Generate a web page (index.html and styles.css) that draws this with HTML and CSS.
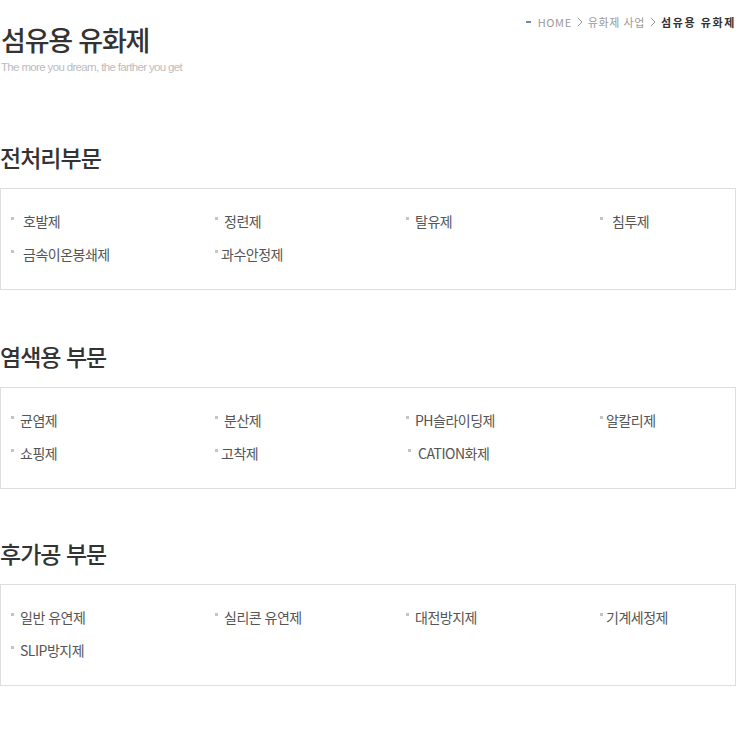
FILE: index.html
```html
<!DOCTYPE html>
<html lang="ko">
<head>
    <meta charset="UTF-8">
    <meta name="viewport" content="width=device-width, initial-scale=1.0">
    <title>섬유용 유화제</title>
    <link rel="stylesheet" href="styles.css">
</head>
<body>
    <div id="container">
        <div id="top">
            <div class="titleBox">
                <h1>섬유용 유화제</h1>
                <p class="sub">The more you dream, the farther you get</p>
            </div>
            <div class="path">
                <span class="dash"></span>
                <span>HOME</span>
                <svg class="arrow" width="6" height="10" viewBox="0 0 6 10"><path d="M0.8 0.8 L5 5 L0.8 9.2" fill="none" stroke="#999" stroke-width="1"/></svg>
                <span>유화제 사업</span>
                <svg class="arrow" width="6" height="10" viewBox="0 0 6 10"><path d="M0.8 0.8 L5 5 L0.8 9.2" fill="none" stroke="#999" stroke-width="1"/></svg>
                <strong>섬유용 유화제</strong>
            </div>
        </div>

        <div class="section first">
            <h2>전처리부문</h2>
            <ul class="items">
                <li class="wide">호발제</li>
                <li>정련제</li>
                <li>탈유제</li>
                <li class="wide">침투제</li>
                <li class="wide">금속이온봉쇄제</li>
                <li class="tight">과수안정제</li>
            </ul>
        </div>

        <div class="section">
            <h2>염색용 부문</h2>
            <ul class="items">
                <li>균염제</li>
                <li>분산제</li>
                <li>PH슬라이딩제</li>
                <li class="tight">알칼리제</li>
                <li>쇼핑제</li>
                <li class="tight">고착제</li>
                <li class="shift">CATION화제</li>
            </ul>
        </div>

        <div class="section last">
            <h2>후가공 부문</h2>
            <ul class="items">
                <li>일반 유연제</li>
                <li>실리콘 유연제</li>
                <li>대전방지제</li>
                <li class="tight">기계세정제</li>
                <li>SLIP방지제</li>
            </ul>
        </div>
    </div>
</body>
</html>
```

FILE: styles.css
```css
*{
    margin: 0;
    padding: 0;
    box-sizing: border-box;
}
body{
    width: 100%;
    background-color: white;
    font-family: "Noto Sans", "Noto Sans CJK KR", sans-serif;
    color: #333;
}
#container{
    width: 736px;
    padding-bottom: 60px;
}
#top{
    display: flex;
    justify-content: space-between;
    align-items: flex-start;
}
.titleBox{
    padding-top: 22px;
    padding-left: 1px;
}
.titleBox h1{
    font-family: "Noto Sans CJK KR", sans-serif;
    font-size: 27px;
    font-weight: 500;
    line-height: 36px;
    letter-spacing: -1.2px;
    color: #333;
}
.sub{
    font-family: "Liberation Sans", sans-serif;
    font-size: 11.5px;
    line-height: 14px;
    letter-spacing: -0.65px;
    color: #bcbcbc;
    margin-top: 2px;
}
.path{
    display: flex;
    align-items: center;
    gap: 5px;
    padding-top: 14px;
    font-family: "Noto Sans CJK KR", sans-serif;
    font-size: 11px;
    line-height: 16px;
    letter-spacing: 0.6px;
    color: #999;
    white-space: nowrap;
}
.path .dash{
    width: 5px;
    height: 2px;
    background-color: #6a8ab4;
    margin-right: 2px;
}
.path strong{
    color: #333;
    font-weight: 700;
    letter-spacing: 1.6px;
}
.section{
    margin-top: 51px;
}
.section.first{
    margin-top: 68px;
}
.section.last{
    margin-top: 49px;
}
.section h2{
    font-family: "Noto Sans CJK KR", sans-serif;
    font-size: 23px;
    font-weight: 500;
    line-height: 30px;
    letter-spacing: -1px;
    color: #333;
    margin-bottom: 16px;
}
.items{
    list-style: none;
    display: grid;
    grid-template-columns: 204px 191px 194px 1fr;
    border: 1px solid #dedede;
    padding: 15px 0 19px 10px;
}
.items li{
    display: flex;
    align-items: center;
    height: 33px;
    font-family: "Noto Sans CJK KR", sans-serif;
    font-size: 14px;
    color: #555;
    letter-spacing: -0.5px;
}
.items li::before{
    content: "";
    width: 3px;
    height: 3px;
    background-color: #c4c4c4;
    margin-right: 6px;
    margin-top: -4px;
}
.items li.wide::before{
    margin-right: 9px;
}
.items li.tight::before{
    margin-right: 3px;
}
.items li.shift{
    padding-left: 2px;
}
.items li.shift::before{
    margin-right: 7px;
}
```
